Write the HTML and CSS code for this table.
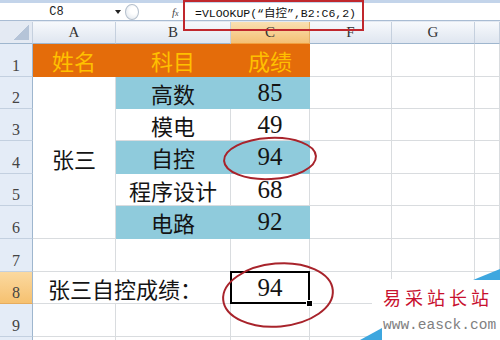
FILE: index.html
```html
<!DOCTYPE html>
<html lang="zh-CN">
<head>
<meta charset="utf-8">
<title>VLOOKUP</title>
<link rel="stylesheet" href="styles.css">
</head>
<body>
<div class="page">
  <div class="topstrip"></div>
  <div class="fbar">
    <div class="namebox">C8</div>
    <div class="nbarrow"></div>
    <div class="splitter"><span class="knob"></span></div>
    <div class="fx">f<span class="fxsub">x</span></div>
    <div class="formula">=VLOOKUP(“自控”,B2:C6,2)</div>
  </div>
  <div class="gap"></div>
  <div class="sheet">
    <div class="ch corner"></div>
    <div class="ch">A</div>
    <div class="ch">B</div>
    <div class="ch sel">C</div>
    <div class="ch">F</div>
    <div class="ch">G</div>
    <div class="ch"></div>

    <div class="rh">1</div>
    <div class="c org">姓名</div>
    <div class="c org">科目</div>
    <div class="c org">成绩</div>
    <div class="c"></div><div class="c"></div><div class="c"></div>

    <div class="rh">2</div>
    <div class="c span5">张三</div>
    <div class="c blu">高数</div>
    <div class="c blu num">85</div>
    <div class="c"></div><div class="c"></div><div class="c"></div>

    <div class="rh">3</div>
    <div class="c">模电</div>
    <div class="c num">49</div>
    <div class="c"></div><div class="c"></div><div class="c"></div>

    <div class="rh">4</div>
    <div class="c blu">自控</div>
    <div class="c blu num">94</div>
    <div class="c"></div><div class="c"></div><div class="c"></div>

    <div class="rh">5</div>
    <div class="c">程序设计</div>
    <div class="c num">68</div>
    <div class="c"></div><div class="c"></div><div class="c"></div>

    <div class="rh">6</div>
    <div class="c blu">电路</div>
    <div class="c blu num">92</div>
    <div class="c"></div><div class="c"></div><div class="c"></div>

    <div class="rh">7</div>
    <div class="c"></div><div class="c"></div><div class="c"></div>
    <div class="c"></div><div class="c"></div><div class="c"></div>

    <div class="rh sel">8</div>
    <div class="c span2 label">张三自控成绩：</div>
    <div class="c num active">94<span class="handle"></span></div>
    <div class="c"></div><div class="c"></div><div class="c"></div>

    <div class="rh">9</div>
    <div class="c"></div><div class="c"></div><div class="c"></div>
    <div class="c"></div><div class="c"></div><div class="c"></div>

    <div class="rh"></div>
    <div class="c"></div><div class="c"></div><div class="c"></div>
    <div class="c"></div><div class="c"></div><div class="c"></div>
  </div>

  <svg class="marks" width="500" height="340" viewBox="0 0 500 340">
    <ellipse cx="270" cy="158.5" rx="46" ry="20.5" transform="rotate(-3 270 158.5)" fill="none" stroke="#a8232b" stroke-width="2"/>
    <ellipse cx="278" cy="295" rx="55" ry="31.5" transform="rotate(-5 278 295)" fill="none" stroke="#a8232b" stroke-width="2"/>
  </svg>
  <div class="redbox"></div>

  <div class="wm">
    <div class="wm-cn">易采站长站</div>
    <div class="wm-en">www.easck.com</div>
  </div>
</div>
</body>
</html>
```

FILE: styles.css
```css
body {
  margin: 0;
}

.page {
  position: relative;
  width: 500px;
  height: 340px;
  overflow: hidden;
  background: #ffffff;
  font-family: "Noto Sans CJK SC", sans-serif;
}

.topstrip {
  height: 3px;
  background: #c3d4ea;
}

.fbar {
  display: flex;
  align-items: center;
  height: 17px;
  border-bottom: 1px solid #a9bcd3;
  background: #ffffff;
}

.namebox {
  width: 113px;
  text-align: center;
  font: 12px "Liberation Mono", monospace;
  color: #222;
}

.nbarrow {
  width: 9px;
  display: flex;
  justify-content: center;
}

.nbarrow::before {
  content: "";
  border-left: 3px solid transparent;
  border-right: 3px solid transparent;
  border-top: 4px solid #222;
}

.splitter {
  width: 50px;
  height: 17px;
  display: flex;
  align-items: center;
}

.knob {
  width: 12px;
  height: 14px;
  margin-left: 3px;
  border-radius: 50%;
  border: 1px solid #b4bfcc;
  background: radial-gradient(circle at 65% 40%, #ffffff 30%, #dbe2ea 100%);
}

.fx {
  width: 14px;
  font: italic 11px "Liberation Serif", serif;
  color: #444;
  white-space: nowrap;
}

.fxsub {
  font-size: 8px;
}

.formula {
  padding-left: 9px;
  font: 11.5px "Liberation Mono", "Noto Sans CJK SC", monospace;
  color: #111;
  white-space: nowrap;
}

.gap {
  height: 1px;
  background: #e3e9f2;
}

.sheet {
  display: grid;
  grid-template-columns: 33px 83px 115px 79px 82px 83px 25px;
  grid-template-rows: 22px 33px 32px 32px 33px 32px 33px 33px 32px 33px 20px;
}

.ch,
.rh,
.c {
  box-sizing: border-box;
  display: flex;
  align-items: center;
  justify-content: center;
  white-space: nowrap;
}

.ch {
  background: linear-gradient(#f7f9fc, #dfe6f0);
  border-right: 1px solid #c5d0de;
  border-bottom: 1px solid #9eb6ce;
  font: 15px "Liberation Serif", serif;
  color: #333;
}

.ch.sel {
  background: linear-gradient(#fae0b2, #f4c074);
  border-right-color: #e4b06a;
  border-bottom-color: #f0a040;
}

.corner {
  background: linear-gradient(to bottom right, transparent 50%, #b5c4d8 50%) right 3px bottom 3px / 15px 16px no-repeat, #e4eaf3;
}

.rh {
  background: #e4ecf7;
  border-right: 1px solid #9eb6ce;
  border-bottom: 1px solid #c3d0e0;
  font: 16px "Liberation Serif", serif;
  color: #444;
  align-items: flex-end;
  padding-bottom: 1px;
}

.rh.sel {
  background: linear-gradient(#fbd9a0, #f6c170);
  border-bottom-color: #e6ac5e;
}

.c {
  border-right: 1px solid #d9dcdf;
  border-bottom: 1px solid #d9dcdf;
  font-size: 22px;
  color: #141414;
}

.org {
  background: #e46c0a;
  border-color: #e46c0a;
  color: #ffc000;
}

.blu {
  background: #8fcbdc;
  border-color: #8fcbdc;
}

.num {
  font: 25px "Liberation Serif", serif;
}

.span5 {
  grid-row: span 5;
}

.span2 {
  grid-column: span 2;
}

.label {
  justify-content: flex-start;
  padding-left: 15px;
}

.active {
  position: relative;
}

.active::after {
  content: "";
  position: absolute;
  left: -1px;
  top: -1px;
  right: -1px;
  bottom: -1px;
  border: 2px solid #000;
}

.handle {
  position: absolute;
  right: -4px;
  bottom: -4px;
  width: 5px;
  height: 5px;
  background: #000;
  border: 1px solid #fff;
  z-index: 1;
}

.marks {
  position: absolute;
  left: 0;
  top: 0;
  pointer-events: none;
}

.redbox {
  position: absolute;
  left: 183px;
  top: 0;
  width: 181px;
  height: 31px;
  box-sizing: border-box;
  border: 2px solid #c0272d;
}

.wm {
  position: absolute;
  left: 372px;
  top: 279px;
  width: 128px;
  height: 61px;
  background: #fff;
  padding-left: 11px;
  box-sizing: border-box;
}

.wm::before {
  content: "";
  position: absolute;
  right: 0;
  top: -10px;
  width: 27px;
  height: 11px;
  background: #3ea7df;
  clip-path: polygon(0 100%, 100% 0, 100% 100%);
}

.wm::after {
  content: "";
  position: absolute;
  left: -12px;
  bottom: 0;
  width: 22px;
  height: 12px;
  background: #3ea7df;
  clip-path: polygon(0 100%, 100% 0, 100% 100%);
}

.wm-cn {
  margin-top: 8px;
  font-size: 18px;
  line-height: 20px;
  letter-spacing: 4px;
  color: #c8102e;
  white-space: nowrap;
}

.wm-en {
  margin-top: 11px;
  font: 14.5px/14px "Liberation Mono", monospace;
  color: #808080;
  white-space: nowrap;
}
```
